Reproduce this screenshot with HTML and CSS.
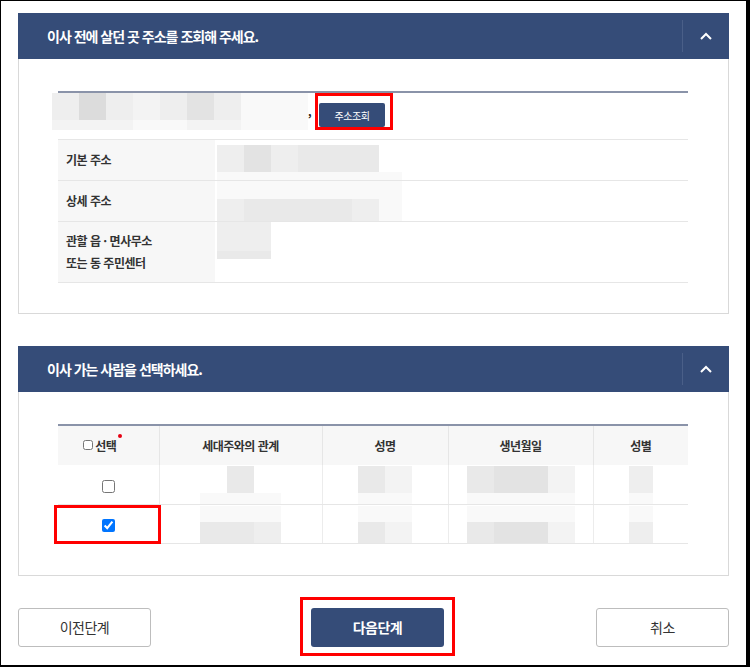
FILE: index.html
```html
<!DOCTYPE html>
<html lang="ko">
<head>
    <meta charset="UTF-8">
    <meta name="viewport" content="width=device-width, initial-scale=1.0">
    <title>전입신고</title>
    <link rel="stylesheet" href="styles.css">
</head>
<body>
    <div class="page">

        <section class="panel">
            <div class="panel-head">
                <h3>이사 전에 살던 곳 주소를 조회해 주세요.</h3>
                <button class="fold"><svg width="12" height="8" viewBox="0 0 12 8"><polyline points="1,7 6,2 11,7" fill="none" stroke="#fff" stroke-width="2"/></svg></button>
            </div>
            <div class="panel-body panel-body-form">
                <table class="form-table">
                    <tr class="search-row">
                        <td colspan="2">
                            <div class="search">
                                <div class="blur blur-input">
                                    <div class="blur-row h27">
                                        <span class="b2"></span><span class="b5"></span><span class="b2"></span><span class="b1"></span><span class="b2"></span><span class="b4"></span><span class="b2"></span><span class="b0"></span><span class="b0"></span><span class="b0 w13"></span>
                                    </div>
                                    <div class="blur-row h10">
                                        <span class="b1"></span><span class="b1"></span><span class="b1"></span><span class="b0"></span><span class="b0"></span><span class="b1"></span><span class="b1"></span><span class="b0"></span><span class="b0"></span><span class="b0 w13"></span>
                                    </div>
                                </div>
                                <span class="tick">,</span>
                                <span class="mark">
                                    <button class="btn-search">주소조회</button>
                                    <i class="redbox redbox-search"></i>
                                </span>
                            </div>
                        </td>
                    </tr>
                    <tr>
                        <th>기본 주소</th>
                        <td class="val">
                            <div class="blur">
                                <div class="blur-row h27">
                                    <span class="b2"></span><span class="b4"></span><span class="b2"></span><span class="b3"></span><span class="b3"></span><span class="b3"></span>
                                </div>
                                <div class="blur-row h8">
                                    <span class="b0 w185"></span>
                                </div>
                            </div>
                        </td>
                    </tr>
                    <tr>
                        <th>상세 주소</th>
                        <td class="val val-top">
                            <div class="blur">
                                <div class="blur-row h18">
                                    <span class="b0 w185"></span>
                                </div>
                                <div class="blur-row h22">
                                    <span class="b2"></span><span class="b3"></span><span class="b3"></span><span class="b3"></span><span class="b3"></span><span class="b2"></span><span class="b0 w23"></span>
                                </div>
                            </div>
                        </td>
                    </tr>
                    <tr class="tall">
                        <th>관할 읍 · 면사무소<br>또는 동 주민센터</th>
                        <td class="val val-top">
                            <div class="blur">
                                <div class="blur-row h29">
                                    <span class="b2"></span><span class="b2"></span>
                                </div>
                                <div class="blur-row h8">
                                    <span class="b3"></span><span class="b3"></span>
                                </div>
                            </div>
                        </td>
                    </tr>
                </table>
            </div>
        </section>

        <section class="panel">
            <div class="panel-head">
                <h3>이사 가는 사람을 선택하세요.</h3>
                <button class="fold"><svg width="12" height="8" viewBox="0 0 12 8"><polyline points="1,7 6,2 11,7" fill="none" stroke="#fff" stroke-width="2"/></svg></button>
            </div>
            <div class="panel-body panel-body-list">
                <table class="list-table">
                    <colgroup>
                        <col style="width: 101px">
                        <col style="width: 163px">
                        <col style="width: 126px">
                        <col style="width: 145px">
                        <col style="width: 95px">
                    </colgroup>
                    <thead>
                        <tr>
                            <th><label class="check-all"><input type="checkbox">선택<i class="req"></i></label></th>
                            <th>세대주와의 관계</th>
                            <th>성명</th>
                            <th>생년월일</th>
                            <th>성별</th>
                        </tr>
                    </thead>
                    <tbody>
                        <tr>
                            <td><input type="checkbox"></td>
                            <td>
                                <div class="blur">
                                    <div class="blur-row h27"><span class="blank w27"></span><span class="b3"></span></div>
                                    <div class="blur-row h11"><span class="b0 w81"></span></div>
                                </div>
                            </td>
                            <td>
                                <div class="blur">
                                    <div class="blur-row h27"><span class="b3"></span><span class="b1"></span></div>
                                    <div class="blur-row h11"><span class="b0 w54"></span></div>
                                </div>
                            </td>
                            <td>
                                <div class="blur">
                                    <div class="blur-row h27"><span class="b3"></span><span class="b4"></span><span class="b4"></span><span class="b1"></span></div>
                                    <div class="blur-row h11"><span class="b0 w108"></span></div>
                                </div>
                            </td>
                            <td>
                                <div class="blur">
                                    <div class="blur-row h27"><span class="b2 w24"></span></div>
                                    <div class="blur-row h11"><span class="b0 w24"></span></div>
                                </div>
                            </td>
                        </tr>
                        <tr>
                            <td class="picked">
                                <input type="checkbox" checked>
                                <i class="redbox redbox-pick"></i>
                            </td>
                            <td>
                                <div class="blur">
                                    <div class="blur-row h16"><span class="b0 w81"></span></div>
                                    <div class="blur-row h21"><span class="b3"></span><span class="b3"></span><span class="b2"></span></div>
                                </div>
                            </td>
                            <td>
                                <div class="blur">
                                    <div class="blur-row h16"><span class="b0 w54"></span></div>
                                    <div class="blur-row h21"><span class="b3"></span><span class="b1"></span></div>
                                </div>
                            </td>
                            <td>
                                <div class="blur">
                                    <div class="blur-row h16"><span class="b0 w108"></span></div>
                                    <div class="blur-row h21"><span class="b3"></span><span class="b4"></span><span class="b4"></span><span class="b1"></span></div>
                                </div>
                            </td>
                            <td>
                                <div class="blur">
                                    <div class="blur-row h16"><span class="b0 w24"></span></div>
                                    <div class="blur-row h21"><span class="b2 w24"></span></div>
                                </div>
                            </td>
                        </tr>
                    </tbody>
                </table>
            </div>
        </section>

        <div class="actions">
            <button class="btn btn-line">이전단계</button>
            <span class="mark mark-next">
                <button class="btn btn-main">다음단계</button>
                <i class="redbox redbox-next"></i>
            </span>
            <button class="btn btn-line">취소</button>
        </div>

    </div>
</body>
</html>
```

FILE: styles.css
```css
* {
    box-sizing: border-box;
}

body {
    margin: 0;
    background-color: #fff;
    font-family: "Noto Sans CJK KR", "Noto Sans", sans-serif;
    color: #333;
}

.page {
    width: 750px;
    height: 667px;
    border-left: 1px solid #000;
    border-top: 1px solid #000;
    border-right: 4px solid #000;
    border-bottom: 2px solid #000;
    padding: 12px 17px 0 17px;
}

/* panels */

.panel {
    border: 1px solid #d9d9d9;
    background-color: #fff;
}

.panel + .panel {
    margin-top: 32px;
}

.panel-head {
    display: flex;
    align-items: center;
    height: 46px;
    margin: -1px -1px 0;
    padding-left: 29px;
    background-color: #354c78;
}

.panel-head h3 {
    flex: 1;
    margin: 0;
    font-size: 14px;
    font-weight: bold;
    letter-spacing: -1px;
    color: #fff;
}

.fold {
    display: flex;
    align-items: center;
    justify-content: center;
    width: 47px;
    height: 32px;
    padding: 0;
    border: none;
    border-left: 1px solid #4a5f88;
    background: none;
    cursor: pointer;
}

.panel-body {
    padding: 32px 40px 32px 39px;
}

.panel-body-form {
    padding-bottom: 30px;
}

.panel-body-list {
    padding-top: 32px;
    padding-bottom: 31px;
}

/* address table */

.form-table,
.list-table {
    width: 100%;
    border-collapse: collapse;
    border-top: 2px solid #8a93a9;
    font-size: 12px;
}

.form-table td,
.form-table th {
    padding: 0;
    border-bottom: 1px solid #e6e6e6;
}

.search-row td {
    height: 47px;
    vertical-align: top;
}

.search {
    display: flex;
    align-items: flex-start;
    margin-left: -6px;
}

.tick {
    width: 11px;
    margin-top: 12px;
    font-size: 11px;
    font-weight: bold;
    line-height: 12px;
    color: #222;
}

.mark {
    position: relative;
    display: inline-block;
}

.btn-search {
    display: block;
    width: 66px;
    height: 24px;
    margin-top: 10px;
    padding: 0;
    border: none;
    border-radius: 2px;
    background-color: #354c78;
    color: #fff;
    font-family: inherit;
    font-size: 10px;
    letter-spacing: -0.5px;
}

.form-table tr {
    height: 40px;
}

.form-table tr.search-row {
    height: 47px;
}

.form-table tr.tall {
    height: 61px;
}

.form-table th {
    width: 157px;
    padding-left: 8px;
    background-color: #f7f7f7;
    text-align: left;
    font-weight: bold;
    line-height: 22px;
    letter-spacing: -0.5px;
    color: #333;
}

.form-table td.val {
    padding-left: 2px;
    vertical-align: top;
    padding-top: 5px;
}

.form-table td.val-top {
    padding-top: 0;
}

/* people table */

.list-table th {
    height: 40px;
    background-color: #f7f7f7;
    border-left: 1px solid #e6e6e6;
    font-weight: bold;
    letter-spacing: -0.5px;
    color: #333;
}

.list-table th:first-child,
.list-table td:first-child {
    border-left: none;
}

.list-table td {
    height: 39px;
    padding: 0;
    border-left: 1px solid #ececec;
    border-bottom: 1px solid #e6e6e6;
    text-align: center;
    vertical-align: top;
}

.list-table td:first-child {
    vertical-align: middle;
}

.list-table td .blur {
    display: inline-block;
    vertical-align: top;
    margin-top: 1px;
}

.list-table input {
    width: 13px;
    height: 13px;
    margin: 0;
    vertical-align: middle;
}

.check-all {
    display: inline-flex;
    align-items: center;
    position: relative;
    margin-right: 17px;
}

.check-all input {
    width: 10px;
    height: 10px;
    margin: 0 2px 0 0;
}

.req {
    position: absolute;
    right: -6px;
    top: -3px;
    width: 4px;
    height: 4px;
    border-radius: 50%;
    background-color: #e60012;
}

.picked {
    position: relative;
}

/* blurred data */

.blur {
    display: block;
}

.blur-row {
    display: flex;
}

.blur-row span {
    display: block;
    width: 27px;
}

.h8 { height: 8px; }
.h10 { height: 10px; }
.h11 { height: 11px; }
.h16 { height: 16px; }
.h18 { height: 18px; }
.h21 { height: 21px; }
.h22 { height: 22px; }
.h27 { height: 27px; }
.h29 { height: 29px; }

.blur-row .w13 { width: 13px; }
.blur-row .w23 { width: 23px; }
.blur-row .w24 { width: 24px; }
.blur-row .w27 { width: 27px; }
.blur-row .w54 { width: 54px; }
.blur-row .w81 { width: 81px; }
.blur-row .w108 { width: 108px; }
.blur-row .w185 { width: 185px; }

.b0 { background-color: #f9f9f9; }
.b1 { background-color: #f3f3f3; }
.b2 { background-color: #eeeeee; }
.b3 { background-color: #e9e9e9; }
.b4 { background-color: #e3e3e3; }
.b5 { background-color: #dcdcdc; }

/* buttons */

.actions {
    display: flex;
    justify-content: space-between;
    margin-top: 32px;
}

.btn {
    width: 133px;
    height: 39px;
    padding: 0;
    border-radius: 3px;
    font-family: inherit;
    font-size: 14px;
    letter-spacing: -0.5px;
    cursor: pointer;
}

.btn-line {
    border: 1px solid #bdbdbd;
    background-color: #fff;
    color: #333;
}

.btn-main {
    display: block;
    border: none;
    background-color: #354c78;
    color: #fff;
    font-weight: bold;
}

.mark-next {
    margin-left: 8px;
}

/* review marks */

.redbox {
    position: absolute;
    border: 3px solid #ff0000;
    pointer-events: none;
}

.redbox-search {
    top: 0;
    left: -4px;
    right: -8px;
    bottom: -3px;
}

.redbox-pick {
    top: 0;
    left: -4px;
    right: -2px;
    bottom: -1px;
}

.redbox-next {
    top: -11px;
    left: -11px;
    right: -11px;
    bottom: -9px;
}
```
